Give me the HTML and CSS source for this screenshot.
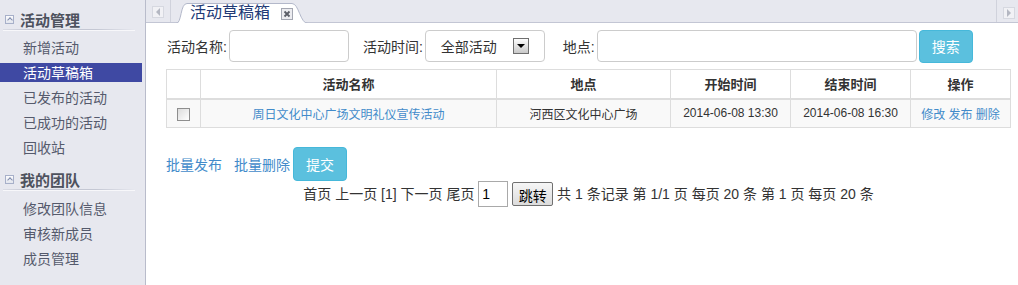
FILE: index.html
```html
<!DOCTYPE html>
<html lang="zh-CN">
<head>
  <meta charset="UTF-8" />
  <title>活动草稿箱</title>
  <link rel="stylesheet" href="styles.css">
</head>
<body>
  <div class="layout">

    <!-- MENU LATERAL -->
    <aside class="sidebar">
      <div class="menu-group">
        <div class="menu-title"><span class="toggle"></span>活动管理</div>
        <div class="menu-line"></div>
        <ul class="menu">
          <li>新增活动</li>
          <li class="active">活动草稿箱</li>
          <li>已发布的活动</li>
          <li>已成功的活动</li>
          <li>回收站</li>
        </ul>
      </div>
      <div class="menu-group">
        <div class="menu-title"><span class="toggle"></span>我的团队</div>
        <div class="menu-line"></div>
        <ul class="menu menu-team">
          <li>修改团队信息</li>
          <li>审核新成员</li>
          <li>成员管理</li>
        </ul>
      </div>
    </aside>

    <main class="main">
      <!-- PESTAÑAS -->
      <div class="tabbar">
        <span class="scroll-btn"><span class="arrow-left"></span></span>
        <div class="tabs">
          <div class="tab">
            <svg class="tab-shape" width="132" height="20" viewBox="0 0 132 20">
              <path d="M0 20.5 C6 20.5 4 0.5 11 0.5 H116 C123 0.5 124 20.5 132 20.5" fill="#fff" stroke="#b3b8ca" />
            </svg>
            <span class="tab-title">活动草稿箱</span>
            <svg class="tab-close" width="12" height="12" viewBox="0 0 12 12">
              <rect x="0.5" y="0.5" width="11" height="11" fill="#ececf0" stroke="#a4a7b2" />
              <path d="M3.5 3.5 L8.5 8.5 M8.5 3.5 L3.5 8.5" stroke="#5a5d66" stroke-width="1.8" />
            </svg>
          </div>
        </div>
        <span class="scroll-btn right"><span class="arrow-right"></span></span>
      </div>

      <div class="content">
        <div class="search">
          <label>活动名称:</label>
          <input type="text" class="input-name" />
          <label class="gap-15">活动时间:</label>
          <div class="select">
            <span>全部活动</span>
            <span class="select-arrow"></span>
          </div>
          <label class="gap-19">地点:</label>
          <input type="text" class="input-place" />
          <button class="btn btn-search">搜索</button>
        </div>

        <table class="grid">
          <colgroup>
            <col style="width:34px" />
            <col style="width:296px" />
            <col style="width:174px" />
            <col style="width:120px" />
            <col style="width:120px" />
            <col style="width:100px" />
          </colgroup>
          <tr>
            <th></th>
            <th>活动名称</th>
            <th>地点</th>
            <th>开始时间</th>
            <th>结束时间</th>
            <th>操作</th>
          </tr>
          <tr>
            <td><span class="check"></span></td>
            <td><a href="#">周日文化中心广场文明礼仪宣传活动</a></td>
            <td>河西区文化中心广场</td>
            <td>2014-06-08 13:30</td>
            <td>2014-06-08 16:30</td>
            <td><a href="#">修改</a> <a href="#">发布</a> <a href="#">删除</a></td>
          </tr>
        </table>

        <div class="bulk">
          <a href="#">批量发布</a>
          <a href="#">批量删除</a>
          <button class="btn btn-submit">提交</button>
        </div>

        <div class="pager">
          首页 上一页 [1] 下一页 尾页 <input type="text" value="1" class="pager-input" /> <button class="pager-btn">跳转</button> 共 1 条记录 第 1/1 页 每页 20 条 第 1 页 每页 20 条
        </div>
      </div>
    </main>
  </div>
</body>
</html>
```

FILE: styles.css
```css
:root {
  --side-bg: #e7e8ef;
  --active: #3f49a3;
  --link: #428bca;
  --info: #5bc0de;
}
* {
  box-sizing: border-box;
}
body {
  margin: 0;
  font-family: "Liberation Sans", "Noto Sans CJK SC", sans-serif;
  color: #333;
  background: #fff;
}
.layout {
  display: flex;
  height: 285px;
  overflow: hidden;
}

/* sidebar */
.sidebar {
  width: 146px;
  flex-shrink: 0;
  background: var(--side-bg);
  border-right: 1px solid #b9bccb;
}
.menu-group {
  padding-top: 10px;
}
.menu-title {
  display: flex;
  align-items: center;
  height: 18px;
  padding-left: 5px;
  font-size: 15px;
  font-weight: bold;
  color: #4e525e;
}
.toggle {
  position: relative;
  width: 9px;
  height: 9px;
  margin-right: 6px;
  border: 1px solid #a7b0c9;
  background: linear-gradient(#fbfbfd, #e3e6ee);
}
.toggle::after {
  content: "";
  position: absolute;
  left: 2px;
  top: 2px;
  width: 3px;
  height: 3px;
  border-left: 1px solid #7f8bab;
  border-top: 1px solid #7f8bab;
  transform: rotate(45deg);
}
.menu-line {
  height: 1px;
  margin: 1px 10px 0 3px;
  background: linear-gradient(to right, rgba(190, 193, 206, 0.3), #c4c7d3 20%, #c4c7d3 70%, rgba(190, 193, 206, 0));
  box-shadow: 0 1px 0 #f7f7fa;
}
.menu {
  list-style: none;
  margin: 0;
  padding: 8px 0 3px;
}
.menu-team {
  padding-top: 9px;
}
.menu li {
  height: 19px;
  line-height: 21px;
  margin-right: 3px;
  padding-left: 23px;
  font-size: 14px;
  color: #555a6c;
}
.menu li + li {
  margin-top: 6px;
}
.menu li.active {
  background: var(--active);
  color: #fff;
}

/* main */
.main {
  flex: 1;
  min-width: 0;
}
.tabbar {
  display: flex;
  height: 23px;
  background: var(--side-bg);
  border-bottom: 1px solid #c3c6d4;
}
.scroll-btn {
  display: flex;
  align-items: center;
  justify-content: center;
  width: 12px;
  height: 12px;
  margin: 6px 6px 0;
  background: #f1f1f5;
  border: 1px solid #d6d8e0;
}
.scroll-btn.right {
  margin: 7px 3px 0 6px;
}
.arrow-left {
  border-top: 4px solid transparent;
  border-bottom: 4px solid transparent;
  border-right: 4px solid #b4b7c2;
}
.arrow-right {
  border-top: 4px solid transparent;
  border-bottom: 4px solid transparent;
  border-left: 4px solid #b4b7c2;
}
.tabs {
  flex: 1;
  display: flex;
  align-items: flex-end;
  border-left: 1px solid #d0d2dc;
  border-right: 1px solid #d0d2dc;
}
.tab {
  position: relative;
  display: flex;
  align-items: center;
  width: 132px;
  height: 20px;
  margin: 0 0 -1px 5px;
}
.tab-shape {
  position: absolute;
  left: 0;
  top: 0;
}
.tab-title {
  position: relative;
  padding-left: 14px;
  font-size: 16px;
  line-height: 20px;
  color: #213a76;
}
.tab-close {
  position: relative;
  margin-left: 11px;
  margin-top: 1px;
}

.content {
  padding: 7px 7px 0 20px;
}
.search {
  display: flex;
  align-items: center;
  height: 32px;
  font-size: 14px;
}
.search label {
  margin-left: 1px;
}
.search .gap-15 {
  margin-left: 14px;
}
.search .gap-19 {
  margin-left: 18px;
}
.search input {
  height: 32px;
  margin-left: 2px;
  border: 1px solid #ccc;
  border-radius: 4px;
  font: inherit;
}
.input-name {
  width: 120px;
}
.input-place {
  width: 320px;
}
.select {
  display: flex;
  align-items: center;
  justify-content: space-between;
  width: 120px;
  height: 32px;
  margin-left: 2px;
  padding: 0 15px 0 15px;
  border: 1px solid #ccc;
  border-radius: 4px;
}
.select-arrow {
  display: flex;
  align-items: center;
  justify-content: center;
  width: 16px;
  height: 16px;
  border: 1px solid #6f6f6f;
  background: linear-gradient(#fdfdfd, #c9c9c9);
}
.select-arrow::after {
  content: "";
  border-left: 4px solid transparent;
  border-right: 4px solid transparent;
  border-top: 4px solid #000;
}
.btn {
  height: 33px;
  border: 1px solid #46b8da;
  border-radius: 4px;
  background: var(--info);
  color: #fff;
  font: inherit;
  font-size: 14px;
  padding: 0;
}
.btn-search {
  width: 54px;
  margin-left: 2px;
}

/* tabla */
.grid {
  width: 845px;
  margin-top: 7px;
  border-collapse: collapse;
  table-layout: fixed;
}
.grid th,
.grid td {
  border: 1px solid #ddd;
  padding: 0;
  text-align: center;
}
.grid th {
  height: 29px;
  font-size: 13px;
  font-weight: bold;
  border-bottom: 2px solid #ddd;
}
.grid td {
  height: 29px;
  font-size: 12px;
  background: #f9f9f9;
}
.grid a,
.bulk a {
  color: var(--link);
  text-decoration: none;
}
.check {
  display: inline-block;
  width: 13px;
  height: 13px;
  margin-top: 3px;
  border: 1px solid #8e8e8e;
  background: linear-gradient(135deg, #dcdcdc, #fff);
  vertical-align: middle;
}

.bulk {
  display: flex;
  align-items: center;
  height: 34px;
  margin-top: 19px;
  font-size: 14px;
}
.bulk a {
  margin-right: 12px;
}
.bulk a + a {
  margin-right: 3px;
}
.btn-submit {
  width: 54px;
  height: 34px;
}

.pager {
  height: 26px;
  line-height: 26px;
  text-align: center;
  font-size: 14px;
  color: #333;
}
.pager-input {
  width: 30px;
  height: 26px;
  padding: 0 3px;
  border: 1px solid #a9a9a9;
  font: inherit;
  font-size: 14px;
  vertical-align: top;
}
.pager-btn {
  width: 41px;
  height: 24px;
  margin-top: 1px;
  padding: 0;
  border: 1px solid #707070;
  border-radius: 2px;
  background: linear-gradient(#f6f6f6, #dcdcdc);
  font: inherit;
  font-size: 14px;
  color: #000;
  vertical-align: top;
}
```
